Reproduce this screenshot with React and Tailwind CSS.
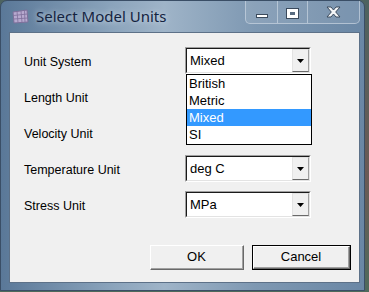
import React from 'react';

const font = { fontFamily: '"Liberation Sans", Arial, sans-serif' };

const MeshIcon = () => (
    <svg width="17" height="15" viewBox="0 0 17 15">
        <path d="M1 3 L15 1 L16 13 L2 14 Z" fill="#b7a9cf" stroke="#7d6f9a" strokeWidth="1" />
        <path d="M5 2.5 L6 13.6 M9 2 L10 13.3 M12.5 1.5 L13 13 M1.5 6.5 L15.3 5 M1.8 10 L15.6 9" stroke="#7d6f9a" strokeWidth="0.8" fill="none" />
    </svg>
);

const Combo = ({ value }) => (
    <div className="w-[126px] h-[27px] border-t border-l border-t-[#a0a0a0] border-l-[#a0a0a0] border-b border-r border-b-white border-r-white">
        <div className="h-full flex border-t border-l border-t-[#1a1a1a] border-l-[#1a1a1a] border-b border-r border-b-[#e3e3e3] border-r-[#e3e3e3] bg-white">
            <div className="flex-1 flex items-center pl-[3px] pt-[1px] text-[13px] text-black">{value}</div>
            <div className="w-[17px] h-full bg-[#f0f0f0] border-t border-l border-t-[#e3e3e3] border-l-[#e3e3e3] border-b border-r border-b-[#696969] border-r-[#a0a0a0] flex items-center justify-center">
                <svg width="7" height="4" viewBox="0 0 7 4"><path d="M0 0 H7 L3.5 4 Z" fill="#000" /></svg>
            </div>
        </div>
    </div>
);

const Button = ({ label, isDefault }) => (
    <div className={`h-[25px] ${isDefault ? 'w-[99px] border border-black' : 'w-[94px]'}`}>
        <div className="h-full border-t border-l border-t-white border-l-white border-b border-r border-b-[#696969] border-r-[#696969]">
            <div className="h-full flex items-center justify-center bg-[#f0f0f0] border-b border-r border-b-[#a0a0a0] border-r-[#a0a0a0] text-[13px] text-black">
                {label}
            </div>
        </div>
    </div>
);

export default function App() {
    const rows = [
        { label: 'Unit System', value: 'Mixed' },
        { label: 'Length Unit', value: null },
        { label: 'Velocity Unit', value: null },
        { label: 'Temperature Unit', value: 'deg C' },
        { label: 'Stress Unit', value: 'MPa' },
    ];
    const options = ['British', 'Metric', 'Mixed', 'SI'];

    return (
        <div className="w-[369px] h-[292px] bg-[linear-gradient(180deg,#4d6360,#6b5a55_60%,#4f6a5c)] overflow-hidden" style={font}>
            <div className="w-[365px] h-[291px] rounded-t-[7px] border border-[#3a4e66] bg-[linear-gradient(90deg,#5a7898,#8aa3bb_30%,#9fb4c8_45%,#7e98b2_70%,#6a87a5)] flex flex-col">
                {/* Title bar */}
                <div className="h-[31px] flex items-start relative">
                    <div className="flex items-center pl-[11px] pt-[8px] gap-[7px]">
                        <MeshIcon />
                        <span className="text-[15px] text-[#14233f] leading-none [text-shadow:0_0_6px_rgba(230,240,250,0.9)]" style={{ fontFamily: '"Noto Sans", "Open Sans", sans-serif' }}>
                            Select Model Units
                        </span>
                    </div>
                    <div className="ml-auto mr-[4px] flex h-[23px] border border-t-0 border-[#c9d5e1]/70 rounded-b-[5px] bg-white/10">
                        <div className="w-[32px] flex items-center justify-center border-r border-[#c9d5e1]/70">
                            <div className="w-[12px] h-[4px] mt-[8px] bg-white border border-[#3b4a5c]" />
                        </div>
                        <div className="w-[30px] flex items-center justify-center border-r border-[#c9d5e1]/70">
                            <div className="w-[11px] h-[9px] mt-[2px] border-[3px] border-t-[3px] border-white outline outline-1 outline-[#3b4a5c] bg-[#3b4a5c]/60" />
                        </div>
                        <div className="w-[51px] flex items-center justify-center">
                            <svg width="17" height="12" viewBox="0 0 17 12">
                                <path d="M2 1 L6 1 L8.5 4 L11 1 L15 1 L10.7 6 L15 11 L11 11 L8.5 8 L6 11 L2 11 L6.3 6 Z" fill="#f4f6f8" stroke="#3b4a5c" strokeWidth="1" />
                            </svg>
                        </div>
                    </div>
                </div>

                {/* Client area */}
                <div className="ml-[8px] mr-[4px] h-[251px] border border-[#5d7188] bg-[#f0f0f0] relative">
                    <div className="pt-[14px] pl-[14px] flex flex-col gap-[9px]">
                        {rows.map((r) => (
                            <div key={r.label} className="flex items-center h-[27px]">
                                <div className="w-[161px] pt-[3px] text-[12.5px] text-black">{r.label}</div>
                                {r.value && <Combo value={r.value} />}
                            </div>
                        ))}
                    </div>

                    {/* Open dropdown list */}
                    <div className="absolute left-[176px] top-[41px] w-[126px] pb-[1px] border border-black bg-white">
                        {options.map((o) => (
                            <div
                                key={o}
                                className={`h-[17px] flex items-center pl-[2px] pt-[1px] text-[13px] ${o === 'Mixed' ? 'bg-[#3399ff] text-white' : 'text-black'}`}
                            >
                                {o}
                            </div>
                        ))}
                    </div>

                    <div className="flex justify-end gap-[8px] pr-[8px] mt-[27px]">
                        <Button label="OK" />
                        <Button label="Cancel" isDefault />
                    </div>
                </div>
            </div>
        </div>
    );
}
